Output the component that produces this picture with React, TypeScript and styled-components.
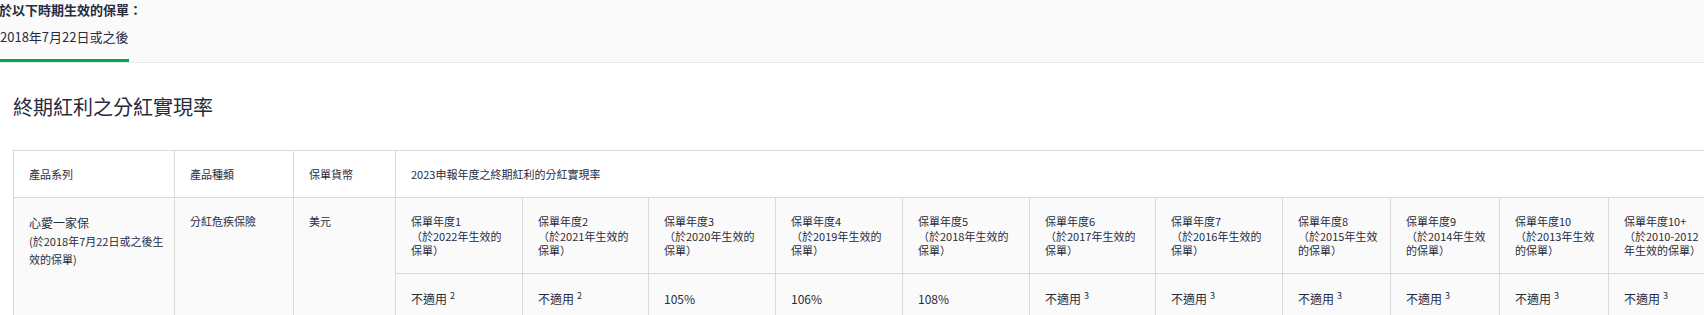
import React from 'react'
import styled, { createGlobalStyle } from 'styled-components'

type YearCol = {
  label: string
  lines: string[]
  value: string
  note?: string
  width: number
}

const years: YearCol[] = [
  { label: '保單年度1', lines: ['（於2022年生效的', '保單）'], value: '不適用', note: '2', width: 127 },
  { label: '保單年度2', lines: ['（於2021年生效的', '保單）'], value: '不適用', note: '2', width: 126 },
  { label: '保單年度3', lines: ['（於2020年生效的', '保單）'], value: '105%', width: 127 },
  { label: '保單年度4', lines: ['（於2019年生效的', '保單）'], value: '106%', width: 127 },
  { label: '保單年度5', lines: ['（於2018年生效的', '保單）'], value: '108%', width: 127 },
  { label: '保單年度6', lines: ['（於2017年生效的', '保單）'], value: '不適用', note: '3', width: 126 },
  { label: '保單年度7', lines: ['（於2016年生效的', '保單）'], value: '不適用', note: '3', width: 127 },
  { label: '保單年度8', lines: ['（於2015年生效', '的保單）'], value: '不適用', note: '3', width: 108 },
  { label: '保單年度9', lines: ['（於2014年生效', '的保單）'], value: '不適用', note: '3', width: 109 },
  { label: '保單年度10', lines: ['（於2013年生效', '的保單）'], value: '不適用', note: '3', width: 109 },
  { label: '保單年度10+', lines: ['（於2010-2012', '年生效的保單）'], value: '不適用', note: '3', width: 108 }
]

export default function App(): JSX.Element {
  return (
    <Page>
      <GlobalStyle />
      <PeriodBar>
        <PeriodTitle>於以下時期生效的保單：</PeriodTitle>
        <Tabs>
          <Tab $active>2018年7月22日或之後</Tab>
        </Tabs>
      </PeriodBar>

      <Content>
        <Heading>終期紅利之分紅實現率</Heading>
        <Table>
          <colgroup>
            <Col $w={161} />
            <Col $w={119} />
            <Col $w={102} />
            {years.map((y) => (
              <Col key={y.label} $w={y.width} />
            ))}
          </colgroup>
          <thead>
            <tr>
              <Th>產品系列</Th>
              <Th>產品種類</Th>
              <Th>保單貨幣</Th>
              <Th colSpan={years.length}>2023申報年度之終期紅利的分紅實現率</Th>
            </tr>
          </thead>
          <tbody>
            <tr>
              <Td rowSpan={2}>
                <ProductName>心愛一家保</ProductName>
                <ProductNote>
                  (於2018年7月22日或之後生
                  <br />
                  效的保單)
                </ProductNote>
              </Td>
              <Td rowSpan={2}>
                <CellText>分紅危疾保險</CellText>
              </Td>
              <Td rowSpan={2}>
                <CellText>美元</CellText>
              </Td>
              {years.map((y) => (
                <Td key={y.label}>
                  <YearLine>{y.label}</YearLine>
                  {y.lines.map((l) => (
                    <YearLine key={l}>{l}</YearLine>
                  ))}
                </Td>
              ))}
            </tr>
            <tr>
              {years.map((y) => (
                <Td key={y.label}>
                  <Value>
                    {y.value}
                    {y.note && <Note>{y.note}</Note>}
                  </Value>
                </Td>
              ))}
            </tr>
          </tbody>
        </Table>
      </Content>
    </Page>
  )
}

const GlobalStyle = createGlobalStyle`
  html, body {
    margin: 0;
    padding: 0;
    overflow: hidden;
    background: #fff;
  }
  body {
    font-family: "Noto Sans CJK TC", "Noto Sans", sans-serif;
    color: #282b3e;
  }
`

const Page = styled.div`
  width: 1704px;
  height: 315px;
  overflow: hidden;
`

const PeriodBar = styled.div`
  background: #fafafa;
  border-bottom: 1px solid #e8e8e8;
  display: flex;
  flex-direction: column;
  height: 63px;
  padding-top: 1px;
  box-sizing: border-box;
`

const PeriodTitle = styled.div`
  font-size: 13px;
  font-weight: 700;
  line-height: 18px;
  margin-left: -1px;
`

const Tabs = styled.div`
  display: flex;
  margin-top: auto;
`

const Tab = styled.div<{ $active?: boolean }>`
  font-size: 13px;
  line-height: 18px;
  padding-bottom: 13px;
  border-bottom: 3px solid ${(p) => (p.$active ? '#00a758' : 'transparent')};
`

const Content = styled.div`
  padding: 0 0 0 13px;
`

const Heading = styled.h2`
  margin: 30px 0 29px;
  font-size: 20px;
  font-weight: 400;
  line-height: 28px;
  color: #282b3e;
`

const Table = styled.table`
  border-collapse: collapse;
  table-layout: fixed;
  width: 1703px;
`

const Col = styled.col<{ $w: number }>`
  width: ${(p) => p.$w}px;
`

const Th = styled.th`
  background: #fff;
  border: 1px solid #d9d9d9;
  padding: 16px 15px 15px;
  text-align: left;
  font-weight: 400;
  font-size: 11px;
  line-height: 15px;
  vertical-align: top;
`

const Td = styled.td`
  background: #fafafa;
  border: 1px solid #d9d9d9;
  padding: 16px 15px 15px;
  vertical-align: top;
  text-align: left;
`

const ProductName = styled.div`
  font-size: 12px;
  line-height: 18px;
`

const ProductNote = styled.div`
  font-size: 11px;
  line-height: 18px;
  white-space: nowrap;
`

const CellText = styled.div`
  font-size: 11px;
  line-height: 15px;
`

const YearLine = styled.div`
  font-size: 11px;
  line-height: 14.67px;
  white-space: nowrap;
`

const Value = styled.div`
  font-size: 12px;
  line-height: 18px;
  white-space: nowrap;
`

const Note = styled.sup`
  font-size: 9px;
  margin-left: 3px;
  vertical-align: 5px;
  line-height: 0;
`
